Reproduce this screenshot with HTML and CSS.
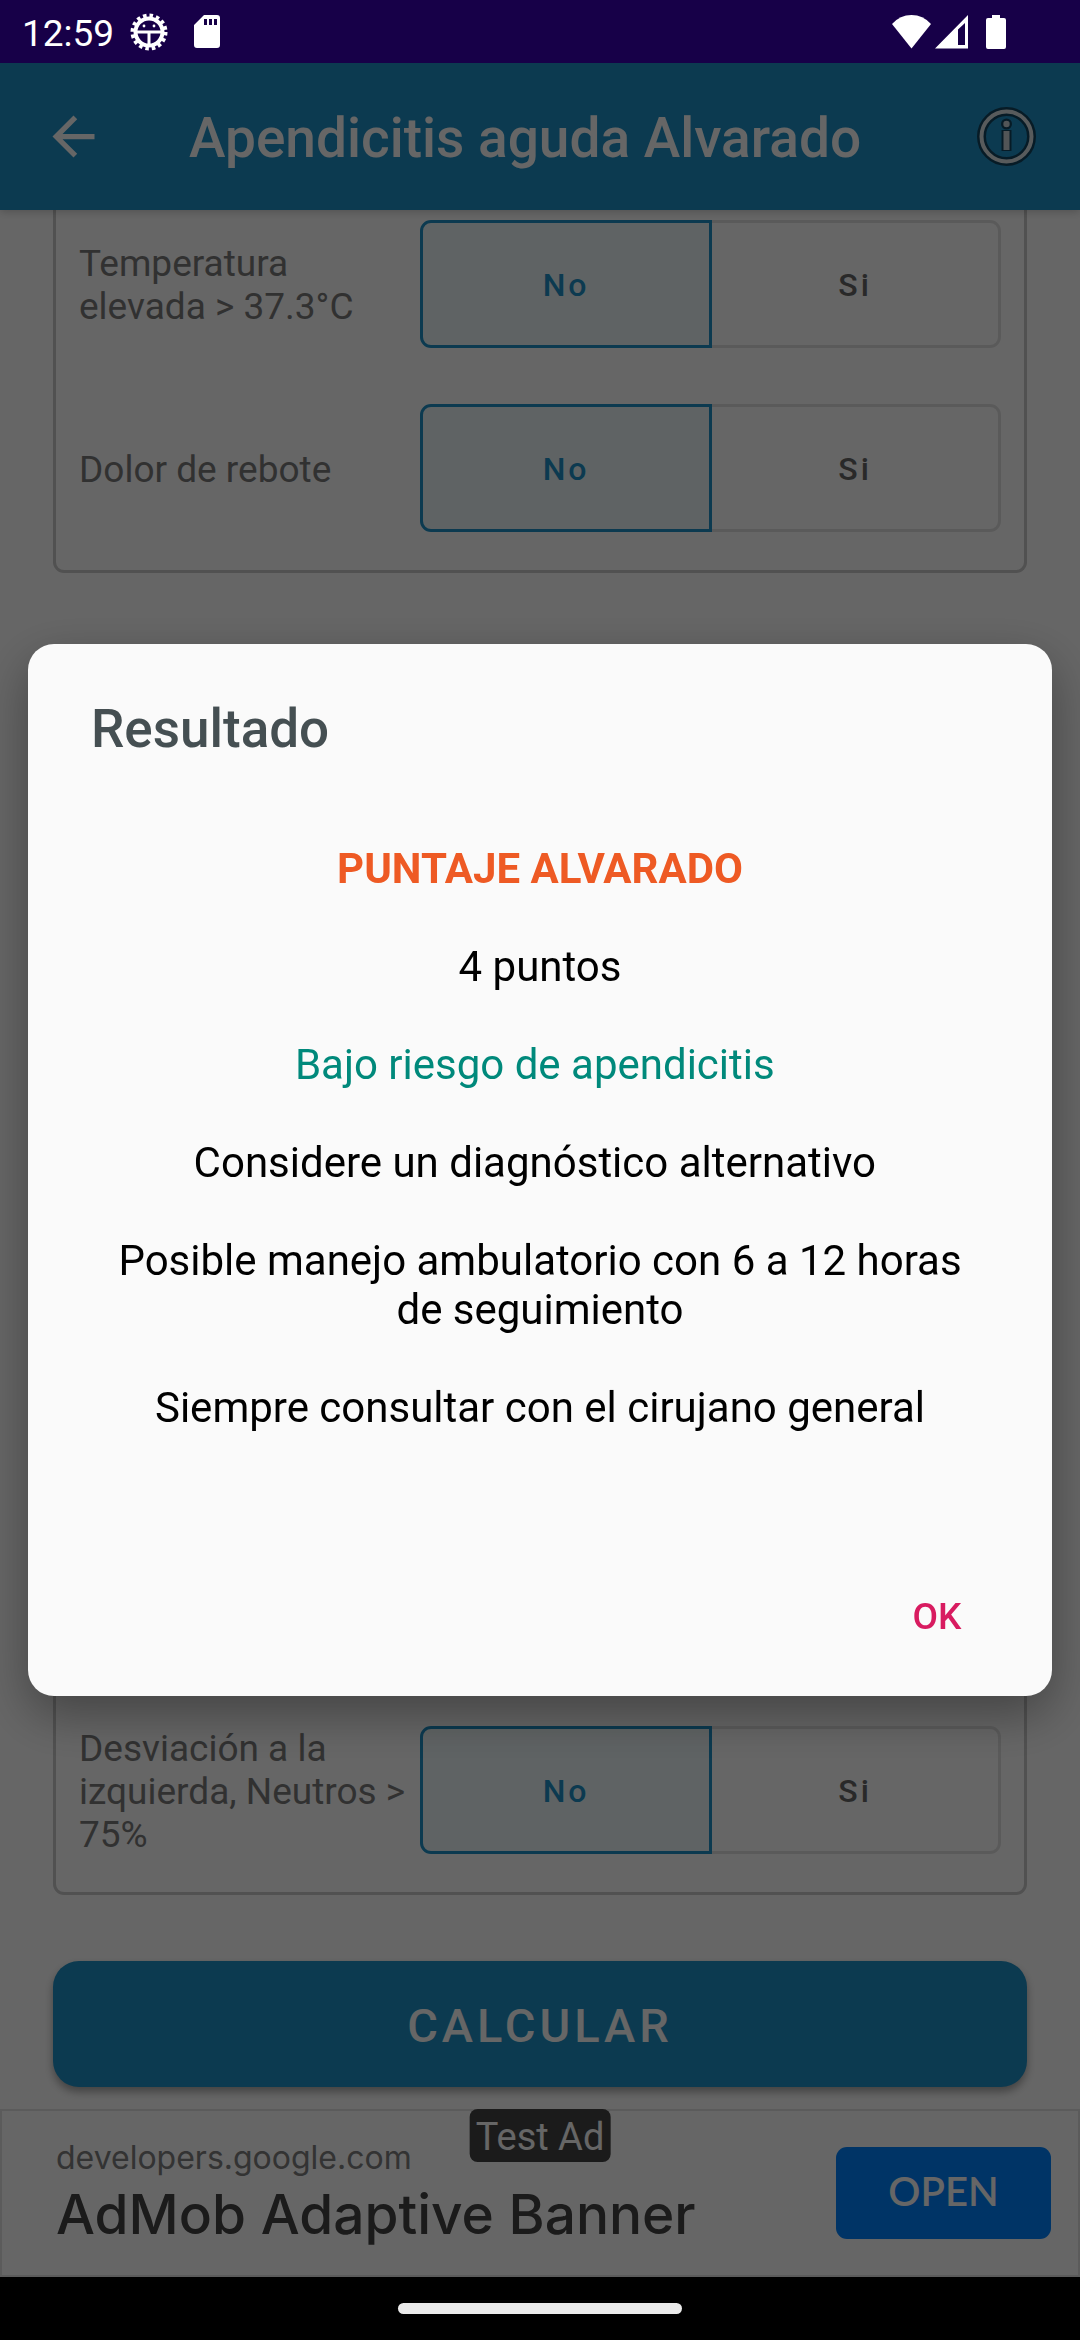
FILE: index.html
```html
<!DOCTYPE html>
<html lang="es">

<head>
    <meta charset="UTF-8">
    <meta name="viewport" content="width=device-width, initial-scale=1.0">
    <title>Apendicitis aguda Alvarado</title>
    <link rel="stylesheet" href="styles.css">
</head>

<body>
    <div class="status-bar">
        <span class="clock">12:59</span>
        <svg class="icon-debug" width="38" height="38" viewBox="0 0 38 38" aria-hidden="true">
            <circle cx="19" cy="19" r="16" fill="none" stroke="#fff" stroke-width="5" stroke-dasharray="3.4 2.883" />
            <circle cx="19" cy="19" r="13.5" fill="none" stroke="#fff" stroke-width="4" />
            <path d="M6 19h26M19 19v14" stroke="#fff" stroke-width="3" />
            <circle cx="14" cy="13" r="1.4" fill="#fff" />
            <circle cx="24" cy="13" r="1.4" fill="#fff" />
        </svg>
        <svg class="icon-sd" width="26" height="34" viewBox="0 0 26 34" aria-hidden="true">
            <path fill="#fff" fill-rule="evenodd" d="M10 0h13q3 0 3 3v27q0 3-3 3H3q-3 0-3-3V10zM10 4v6h3V4zM15 4v6h3V4zM20 4v6h3V4z" />
        </svg>
        <div class="signals">
            <svg width="39" height="34" viewBox="0 0 39 34" aria-hidden="true">
                <path fill="#fff" d="M0 9Q8 0 19.500 0T39 9L19.500 33.500z" />
            </svg>
            <svg width="33" height="34" viewBox="0 0 33 34" aria-hidden="true">
                <path fill="#fff" fill-rule="evenodd" d="M0 33.500L33 0v33.500zM23 14.500V30h7V8z" />
            </svg>
            <svg class="icon-battery" width="20" height="34" viewBox="0 0 20 34" aria-hidden="true">
                <path fill="#fff" d="M6 0h8v3h4q2 0 2 2v27q0 2-2 2H2q-2 0-2-2V5q0-2 2-2h4z" />
            </svg>
        </div>
    </div>

    <header class="app-bar">
        <button class="icon-button" type="button" aria-label="Volver">
            <svg width="63" height="63" viewBox="0 0 24 24">
                <path fill="#fff" d="M20 11H7.830l5.590-5.590L12 4l-8 8 8 8 1.410-1.410L7.830 13H20v-2z" />
            </svg>
        </button>
        <h1>Apendicitis aguda Alvarado</h1>
        <button class="icon-button" type="button" aria-label="Información">
            <svg width="63" height="63" viewBox="0 0 63 63">
                <g fill="none" stroke="#124560">
                    <circle cx="31.500" cy="31.500" r="25" stroke-width="9" />
                    <path d="M31.500 25v21" stroke-width="10" />
                    <circle cx="31.500" cy="19" r="2.500" stroke-width="6" />
                </g>
                <circle cx="31.500" cy="31.500" r="25" fill="none" stroke="#dde3e7" stroke-width="4" />
                <path d="M31.500 26v19" stroke="#cdd5da" stroke-width="6" />
                <circle cx="31.500" cy="19" r="3.200" fill="#cdd5da" />
            </svg>
        </button>
    </header>

    <form class="score-form">
        <div class="card card-scrolled">
            <div class="row">
                <span class="row-label" id="temperatura">Temperatura elevada &gt; 37.3°C</span>
                <div class="toggle" role="radiogroup" aria-labelledby="temperatura">
                    <label><input type="radio" name="temperatura" checked>No</label>
                    <label><input type="radio" name="temperatura">Si</label>
                </div>
            </div>
            <div class="row">
                <span class="row-label" id="rebote">Dolor de rebote</span>
                <div class="toggle" role="radiogroup" aria-labelledby="rebote">
                    <label><input type="radio" name="rebote" checked>No</label>
                    <label><input type="radio" name="rebote">Si</label>
                </div>
            </div>
        </div>

        <div class="card card-fill">
            <div class="row">
                <span class="row-label" id="desviacion">Desviación a la izquierda, Neutros &gt; 75%</span>
                <div class="toggle" role="radiogroup" aria-labelledby="desviacion">
                    <label><input type="radio" name="desviacion" checked>No</label>
                    <label><input type="radio" name="desviacion">Si</label>
                </div>
            </div>
        </div>

        <button class="calculate" type="button">CALCULAR</button>
    </form>

    <aside class="ad">
        <span class="ad-badge">Test Ad</span>
        <div class="ad-text">
            <span class="ad-site">developers.google.com</span>
            <span class="ad-title">AdMob Adaptive Banner</span>
        </div>
        <a class="ad-open" href="#">OPEN</a>
    </aside>

    <div class="nav-bar"><span class="nav-handle"></span></div>

    <div class="scrim">
        <div class="dialog" role="dialog" aria-modal="true" aria-labelledby="resultado">
            <h2 id="resultado">Resultado</h2>
            <div class="message">
                <p class="score-name">PUNTAJE ALVARADO</p>
                <p>4 puntos</p>
                <p class="risk-low">Bajo riesgo de apendicitis&nbsp;</p>
                <p>Considere un diagnóstico alternativo&nbsp;</p>
                <p>Posible manejo ambulatorio con 6 a 12 horas de seguimiento</p>
                <p>Siempre consultar con el cirujano general</p>
            </div>
            <div class="actions">
                <button class="ok" type="button">OK</button>
            </div>
        </div>
    </div>
</body>

</html>
```
FILE: styles.css
```css
* {
    box-sizing: border-box;
}

body {
    margin: 0;
    height: 100vh;
    display: flex;
    flex-direction: column;
    font-family: Roboto, sans-serif;
    background-color: #ffffff;
    overflow: hidden;
}

button {
    font-family: inherit;
    border: none;
    padding: 0;
    cursor: pointer;
}

svg {
    display: block;
}

/* System bars stay above the scrim */
.status-bar {
    position: relative;
    z-index: 2;
    flex: none;
    height: 63px;
    padding: 0 74px 0 22px;
    display: flex;
    align-items: center;
    background-color: #170048;
    color: #ffffff;
}

.clock {
    font-size: 37px;
    line-height: 43px;
    padding-top: 3px;
}

.icon-debug {
    margin-left: 16px;
}

.icon-sd {
    margin-left: 26px;
}

.signals {
    margin-left: auto;
    display: flex;
    gap: 4px;
}

.icon-battery {
    margin-left: 14px;
}

.nav-bar {
    position: relative;
    z-index: 2;
    flex: none;
    height: 63px;
    display: flex;
    align-items: center;
    justify-content: center;
    background-color: #000000;
}

.nav-handle {
    width: 284px;
    height: 11px;
    border-radius: 6px;
    background-color: #ebebeb;
}

.app-bar {
    position: relative;
    flex: none;
    height: 147px;
    padding: 0 42px;
    display: flex;
    align-items: center;
    background-color: #1e91c8;
    color: #ffffff;
    box-shadow: 0 2px 8px rgba(0, 0, 0, 0.2);
}

.icon-button {
    background: none;
}

.app-bar h1 {
    flex: 1;
    margin: 0 0 0 84px;
    padding-top: 2px;
    font-size: 55px;
    line-height: 62px;
    font-weight: 500;
}

.score-form {
    flex: 1;
    min-height: 0;
    padding: 0 53px 22px;
    display: flex;
    flex-direction: column;
}

.card {
    border: 3px solid #cacaca;
    border-radius: 11px;
    padding: 10px 23px;
}

.card-scrolled {
    border-top: none;
    border-radius: 0 0 11px 11px;
    padding-top: 0;
}

.card-scrolled .row:first-child {
    padding-top: 10px;
}

.card-fill {
    flex: 1;
    margin: 126px 0 66px;
    display: flex;
    flex-direction: column;
    justify-content: flex-end;
}

.row {
    padding: 28px 0;
    display: grid;
    grid-template-columns: 37% 63%;
    grid-template-rows: 128px;
    align-items: center;
}

.row-label {
    padding-top: 2px;
    font-size: 37px;
    line-height: 43px;
    color: #7c7c7c;
}

.toggle {
    display: flex;
    height: 128px;
}

.toggle label {
    position: relative;
    flex: 1;
    display: flex;
    align-items: center;
    justify-content: center;
    padding-top: 2px;
    border: 3px solid #e2e2e2;
    font-size: 32px;
    font-weight: 500;
    letter-spacing: 3px;
    color: #666666;
}

.toggle label:first-child {
    border-radius: 11px 0 0 11px;
}

.toggle label:last-child {
    border-radius: 0 11px 11px 0;
    margin-left: -3px;
}

.toggle label:has(input:checked) {
    z-index: 1;
    border-color: #1e91c8;
    background-color: #eef8f9;
    color: #1e91c8;
}

.toggle input {
    position: absolute;
    opacity: 0;
}

.calculate {
    flex: none;
    height: 126px;
    padding-top: 2px;
    border-radius: 26px;
    background-color: #1e91c8;
    color: #ffffff;
    font-size: 47px;
    font-weight: 500;
    letter-spacing: 4px;
    box-shadow: 0 5px 8px rgba(0, 0, 0, 0.35);
}

.ad {
    position: relative;
    flex: none;
    height: 168px;
    padding: 0 27px 0 54px;
    display: flex;
    align-items: center;
    justify-content: space-between;
    border: 2px solid #e4e4e4;
    background-color: #ffffff;
}

.ad-badge {
    position: absolute;
    top: -2px;
    left: 50%;
    transform: translateX(-50%);
    padding: 7px 6px 3px;
    border-radius: 8px;
    background-color: #444444;
    color: #ffffff;
    font-size: 38px;
    line-height: 43px;
}

.ad-text {
    display: flex;
    flex-direction: column;
    padding-bottom: 6px;
    font-family: Inter, sans-serif;
}

.ad-site {
    font-size: 32px;
    line-height: 48px;
    color: #808080;
}

.ad-title {
    font-size: 55px;
    line-height: 64px;
    font-weight: 500;
    color: #444444;
}

.ad-open {
    width: 215px;
    height: 92px;
    padding-bottom: 4px;
    display: flex;
    align-items: center;
    justify-content: center;
    border-radius: 11px;
    background-color: #0082ff;
    color: #ffffff;
    font-family: Lato, sans-serif;
    font-size: 40px;
    font-weight: 600;
    text-decoration: none;
}

.scrim {
    position: fixed;
    inset: 0;
    z-index: 1;
    padding: 0 28px;
    display: flex;
    align-items: center;
    background-color: rgba(0, 0, 0, 0.6);
}

.dialog {
    flex: 1;
    padding: 54px 63px 30px;
    border-radius: 26px;
    background-color: #fafafa;
    box-shadow: 0 18px 50px rgba(0, 0, 0, 0.35);
}

.dialog h2 {
    margin: 0 0 84px;
    font-size: 53px;
    line-height: 62px;
    font-weight: 500;
    color: #454f52;
}

.message {
    font-size: 42px;
    line-height: 49px;
    text-align: center;
    color: #000000;
}

.message p {
    margin: 0 0 49px;
}

.message .score-name {
    font-weight: 700;
    color: #ee5a24;
}

.message .risk-low {
    color: #00897b;
}

.actions {
    display: flex;
    justify-content: flex-end;
    margin-top: 134px;
}

.ok {
    width: 104px;
    height: 100px;
    background: none;
    color: #d81b60;
    font-size: 37px;
    font-weight: 500;
}
```
